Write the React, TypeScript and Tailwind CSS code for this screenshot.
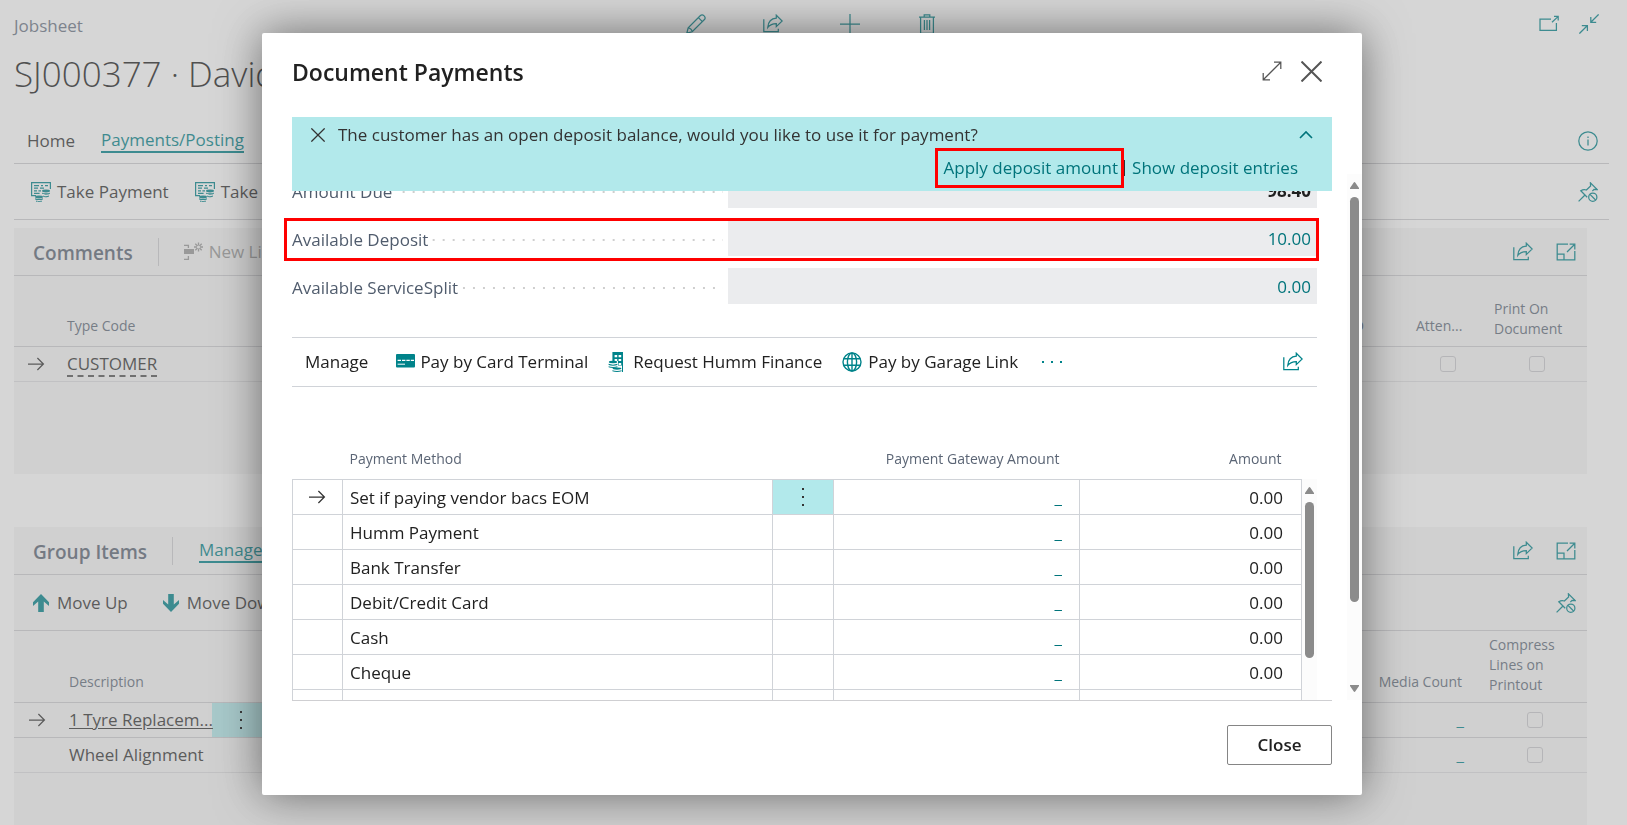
import React from "react";

type IconProps = { className?: string };

const base = {
  fill: "none",
  stroke: "currentColor",
  strokeWidth: 1.25,
  "aria-hidden": true,
} as const;

function ShareIcon({ className = "size-5" }: IconProps) {
  return (
    <svg viewBox="0 0 20 20" className={className} {...base}>
      <path d="M.8 5.2V17.6H15.3V14.8" />
      <path d="M13.3 1.2 19.2 7 13.3 12.6V9.6C9.6 9.6 7 10.6 4.8 13.4 5.2 8 8.4 4.5 13.3 4.2Z" />
    </svg>
  );
}

function PencilIcon() {
  return (
    <svg viewBox="0 0 20 20" className="size-5" {...base}>
      <path d="M.8 19.2 2.2 13.8 14.2 1.8C15.2.8 16.8.6 18.1 1.9 19.4 3.2 19.2 4.8 18.2 5.8L6.2 17.8Z" />
      <path d="M12.4 3.6 16.4 7.6M2.2 13.8C4 13.8 6.2 16 6.2 17.8" />
    </svg>
  );
}

function PlusIcon() {
  return (
    <svg viewBox="0 0 20 20" className="size-5" {...base}>
      <path d="M10 0V20M0 10H20" />
    </svg>
  );
}

function TrashIcon() {
  return (
    <svg viewBox="0 0 20 20" className="size-5" {...base}>
      <path d="M2 3.2H18M7.2 3V.8H12.8V3M3.6 3.4V19.4H16.4V3.4M7.4 6V16M10 6V16M12.6 6V16" />
    </svg>
  );
}

function PopOutIcon() {
  return (
    <svg viewBox="0 0 20 20" className="size-5" {...base}>
      <path d="M12 5H1V16.4H17.4V9M13 8.2 19 2.6M15 2.4H19.2V6.6" />
    </svg>
  );
}

function CollapseIcon() {
  return (
    <svg viewBox="0 0 20 20" className="size-5" {...base}>
      <path d="M19.6.4 11.8 8.2M11.8 3V8.4H17.2M.4 19.6 8.2 11.8M2.8 11.6H8.4V17" />
    </svg>
  );
}

function ExpandIcon() {
  return (
    <svg viewBox="0 0 20 20" className="size-5" {...base}>
      <path d="M1.2 18.8 18.8 1.2M12 1.2H18.8V8M1.2 12V18.8H8" />
    </svg>
  );
}

function CloseIcon({ className = "size-5" }: IconProps) {
  return (
    <svg viewBox="0 0 20 20" className={className} {...base}>
      <path d="M.5.5 19.5 19.5M19.5.5.5 19.5" vectorEffect="non-scaling-stroke" />
    </svg>
  );
}

function InfoIcon() {
  return (
    <svg viewBox="0 0 20 20" className="size-5" {...base}>
      <circle cx="10" cy="10" r="9.2" />
      <path d="M10 8.4V14.4M10 5.4V7" />
    </svg>
  );
}

function UnpinIcon() {
  return (
    <svg viewBox="0 0 20 20" className="size-5" {...base}>
      <path d="M.6 19.4 7 13M9.2 15.2 2.8 8.8C4.8 7.4 7 7.4 8.4 8L12.6 4 12.4.8 19.2 7.6 16 7.4 14.4 9.2" />
      <circle cx="14.8" cy="15.2" r="4.1" />
      <path d="M12 12.4 17.6 18" />
    </svg>
  );
}

function MaximizePartIcon() {
  return (
    <svg viewBox="0 0 20 20" className="size-5" {...base}>
      <path d="M12 2.2H1.2V17.8H18.8V9M1.2 12H8V17.8M11 10 18 3M13.6 2.2H18.8V7.4" />
    </svg>
  );
}

function RowArrowIcon() {
  return (
    <svg viewBox="0 0 18 18" className="size-[18px]" {...base}>
      <path d="M1 9H16.4M10.4 3 16.4 9 10.4 15" />
    </svg>
  );
}

function TakePaymentIcon() {
  return (
    <svg viewBox="0 0 20 20" className="size-5 shrink-0" fill="currentColor" aria-hidden>
      <path d="M0 0H20V7H18.8V1.2H1.2V13H5V14.2H0Z" />
      <path d="M3 3H8V4.2H3ZM10 3H12V4.2H10ZM14 3H17V4.2H14ZM3 5.6H7V6.8H3ZM9 5.6H13V6.8H9ZM3 8.2H6V9.4H3ZM7.4 8.2H10V9.4H7.4ZM3 10.8H8.6V12H3Z" />
      <ellipse cx="15" cy="9" rx="4" ry="1.4" />
      <path d="M11 10.4C12.5 11.6 17.5 11.6 19 10.4V11.6C17.5 13.2 12.5 13.2 11 11.6ZM12 13.4C13 14.4 16 14.4 18 13.4V14.6C17 15.6 13 15.6 12 14.6Z" />
      <ellipse cx="8" cy="15" rx="4" ry="1.4" />
      <path d="M4 16.2C5.5 17.2 10.5 17.2 12 16.2V17.2C10.5 18.4 5.5 18.4 4 17.2ZM5 18.6C6 19.2 10 19.2 11 18.6V19.6C10 20 6 20 5 19.6Z" />
    </svg>
  );
}

function NewLineIcon() {
  return (
    <svg viewBox="0 0 20 20" className="size-5 shrink-0" aria-hidden>
      <path d="M0 7H10V12H0Z" fill="currentColor" />
      <path
        d="M0 3.4H4.4V6M0 17.4H4.4V14M14.5 .5V9.5M10 5H19M11.3 1.8 17.7 8.2M17.7 1.8 11.3 8.2"
        fill="none"
        stroke="currentColor"
        strokeWidth="1.3"
      />
      <circle cx="14.5" cy="5" r="1.6" className="fill-[#f5f5f5]" />
    </svg>
  );
}

function MoveIcon({ className = "" }: IconProps) {
  return (
    <svg viewBox="0 0 16 18" className={`h-[18px] w-4 shrink-0 ${className}`} fill="currentColor" aria-hidden>
      <path d="M8 0 16 8.2V12L10.8 7.4V18H5.2V7.4L0 12V8.2Z" />
    </svg>
  );
}

function CardIcon() {
  return (
    <svg viewBox="0 0 20 20" className="size-5 shrink-0" aria-hidden>
      <rect x="0" y="2" width="19" height="13.5" rx="1" fill="currentColor" />
      <path d="M1.6 8.4H18" stroke="white" strokeWidth="1.4" strokeDasharray="3.4 1" />
      <path d="M1.6 12.2H9" stroke="white" strokeWidth="1" />
    </svg>
  );
}

function FinanceIcon() {
  return (
    <svg viewBox="0 0 16 20" className="h-5 w-4 shrink-0" aria-hidden>
      <path d="M4.4 0H15V20H4.4Z" fill="currentColor" />
      <path d="M6.6 3H9.2V5.2H6.6ZM10.6 3H13.2V5.2H10.6ZM6.6 7H9.2V9H6.6ZM10.6 7H13.2V9H10.6ZM10.6 11H13.2V13H10.6Z" fill="white" />
      <path d="M0 9H10V13.5H14V20H2V15H0Z" fill="white" />
      <g fill="currentColor">
        <ellipse cx="5" cy="10" rx="4.2" ry="1.2" />
        <path d="M.6 11.8C3 12.9 7 12.9 9.4 11.8V12.9C7 14 3 14 .6 12.9ZM.6 14.2C3 15.3 7 15.3 9.4 14.2V15.3C7 16.3 3 16.3 .6 15.3Z" />
        <ellipse cx="9" cy="16.6" rx="4.4" ry="1.1" />
        <path d="M4.4 18.2C7 19.2 11 19.2 13.6 18.2V19.2C11 20.2 7 20.2 4.4 19.2Z" />
      </g>
    </svg>
  );
}

function GlobeIcon() {
  return (
    <svg viewBox="0 0 20 20" className="size-5 shrink-0" {...base} strokeWidth={1.4}>
      <circle cx="10" cy="10" r="9" />
      <ellipse cx="10" cy="10" rx="4.6" ry="9" />
      <path d="M10 1V19M1.6 6.8H18.4M1.6 13.2H18.4" />
    </svg>
  );
}

function Dots({ vertical = false }: { vertical?: boolean }) {
  return vertical ? (
    <svg viewBox="0 0 4 20" className="h-5 w-1" fill="currentColor" aria-hidden>
      <path d="M1 1H3V3H1ZM1 9H3V11H1ZM1 17H3V19H1Z" />
    </svg>
  ) : (
    <svg viewBox="0 0 20 4" className="h-1 w-5" fill="currentColor" aria-hidden>
      <path d="M0 1H2V3H0ZM9 1H11V3H9ZM18 1H20V3H18Z" />
    </svg>
  );
}

function IconButton({ label, children, className = "" }: { label: string; children: React.ReactNode; className?: string }) {
  return (
    <button type="button" aria-label={label} className={`flex items-center justify-center ${className}`}>
      {children}
    </button>
  );
}

function Check({ label }: { label: string }) {
  return (
    <input
      type="checkbox"
      aria-label={label}
      className="mx-auto block size-4 appearance-none rounded-[3px] border border-[#c9c9cd]"
    />
  );
}

const TEAL = "text-[#00838a]";

function PageHeader() {
  return (
    <header className="pr-[18px] pl-[14px]">
      <div className="flex h-12 items-center">
        <span className="w-[672px] pt-1 text-[17px] text-[#6b7585]">Jobsheet</span>
        <div className={`flex flex-1 items-center gap-[57px] ${TEAL}`}>
          <IconButton label="Edit"><PencilIcon /></IconButton>
          <IconButton label="Share"><ShareIcon /></IconButton>
          <IconButton label="New"><PlusIcon /></IconButton>
          <IconButton label="Delete"><TrashIcon /></IconButton>
        </div>
        <div className={`flex gap-5 pr-[10px] ${TEAL}`}>
          <IconButton label="Open in new window"><PopOutIcon /></IconButton>
          <IconButton label="Collapse"><CollapseIcon /></IconButton>
        </div>
      </div>
      <h1 className="h-[70px] pt-[2px] text-[35px] leading-[48px] font-light whitespace-nowrap text-[#212121]">
        SJ000377 · David
      </h1>
      <nav className="flex h-[46px] items-center gap-[26px] border-b border-[#cdcdd1] pr-[11px] pl-[13px]">
        <a href="#home" className="text-[#333]">Home</a>
        <a href="#payments" className={`border-b-2 border-current leading-[22px] ${TEAL}`}>Payments/Posting</a>
        <IconButton label="Details" className={`ml-auto ${TEAL}`}><InfoIcon /></IconButton>
      </nav>
      <div className="flex h-14 items-center gap-[26px] border-b border-[#cdcdd1] pr-[11px] pl-[17px] text-[#333]">
        <button type="button" className="flex items-center gap-[6px]">
          <span className={TEAL}><TakePaymentIcon /></span>Take Payment
        </button>
        <button type="button" className="flex items-center gap-[6px]">
          <span className={TEAL}><TakePaymentIcon /></span>Take Deposit
        </button>
        <IconButton label="Unpin" className={`ml-auto ${TEAL}`}><UnpinIcon /></IconButton>
      </div>
    </header>
  );
}

function PartActions() {
  return (
    <div className={`ml-auto flex gap-[23px] ${TEAL}`}>
      <IconButton label="Share part"><ShareIcon /></IconButton>
      <IconButton label="Maximize part"><MaximizePartIcon /></IconButton>
    </div>
  );
}

function CommentsPart() {
  return (
    <section className="mt-2 mr-10 ml-[14px] h-[246px] bg-[#f5f5f5]">
      <div className="flex h-12 items-center border-b border-[#cdcdd1] pr-[11px] pl-[19px]">
        <h2 className="pt-[2px] text-[19px] font-semibold text-[#5c6675]">Comments</h2>
        <span className="ml-[25px] h-7 w-px bg-[#cdcdd1]" />
        <button type="button" className="ml-[25px] flex items-center gap-[5px] text-[#999]" disabled>
          <NewLineIcon />New Line
        </button>
        <PartActions />
      </div>
      <table className="w-full table-fixed border-collapse">
        <colgroup>
          <col className="w-[53px]" />
          <col />
          <col className="w-[78px]" />
          <col className="w-[78px]" />
          <col className="w-[100px]" />
        </colgroup>
        <thead>
          <tr className="h-[70px] border-b border-[#cdcdd1] text-left align-bottom text-[14px] leading-5 text-[#606b7a]">
            <th />
            <th className="pb-[10px] font-normal">Type Code</th>
            <th className="pr-[45px] pb-[10px] text-right font-normal">ID</th>
            <th className="pb-[10px] pl-[7px] font-normal">Atten...</th>
            <th className="pb-[7px] pl-[7px] font-normal">Print On<br />Document</th>
          </tr>
        </thead>
        <tbody>
          <tr className="h-[35px] border-b border-[#dddddf]">
            <td className="pl-[13px] text-[#333]"><RowArrowIcon /></td>
            <td className="text-[#333]">
              <a href="#customer" className="border-b-2 border-dashed border-[#555] leading-5">CUSTOMER</a>
            </td>
            <td />
            <td><Check label="Attention" /></td>
            <td><Check label="Print on document" /></td>
          </tr>
        </tbody>
      </table>
    </section>
  );
}

function GroupItemsPart() {
  const rows = [
    { text: "1 Tyre Replacem...", active: true },
    { text: "Wheel Alignment", active: false },
  ];
  return (
    <section className="mt-[53px] mr-10 ml-[14px] flex-1 bg-[#f5f5f5]">
      <div className="flex h-12 items-center border-b border-[#cdcdd1] pr-[11px] pl-[19px]">
        <h2 className="pt-[2px] text-[19px] font-semibold text-[#5c6675]">Group Items</h2>
        <span className="ml-[25px] h-7 w-px bg-[#cdcdd1]" />
        <a href="#manage" className={`ml-[26px] border-b-2 border-current leading-[22px] ${TEAL}`}>Manage</a>
        <PartActions />
      </div>
      <div className="flex h-14 items-center gap-[35px] border-b border-[#cdcdd1] pr-[11px] pl-[19px] text-[#333]">
        <button type="button" className="flex items-center gap-2">
          <span className={TEAL}><MoveIcon /></span>Move Up
        </button>
        <button type="button" className="flex items-center gap-2">
          <span className={TEAL}><MoveIcon className="rotate-180" /></span>Move Down
        </button>
        <IconButton label="Unpin actions" className={`ml-auto ${TEAL}`}><UnpinIcon /></IconButton>
      </div>
      <table className="w-full table-fixed border-collapse">
        <colgroup>
          <col className="w-[55px]" />
          <col className="w-[143px]" />
          <col className="w-[58px]" />
          <col />
          <col className="w-[105px]" />
        </colgroup>
        <thead>
          <tr className="h-[71px] border-b border-[#cdcdd1] text-left align-bottom text-[14px] leading-5 text-[#606b7a]">
            <th />
            <th className="pb-[10px] font-normal">Description</th>
            <th />
            <th className="pr-[20px] pb-[10px] text-right font-normal">Media Count</th>
            <th className="pb-[7px] pl-[7px] font-normal">Compress<br />Lines on<br />Printout</th>
          </tr>
        </thead>
        <tbody>
          {rows.map((r) => (
            <tr key={r.text} className="h-[35px] border-b border-[#cdcdd1] last:border-[#dddddf]">
              <td className="pl-[14px] text-[#333]">{r.active && <RowArrowIcon />}</td>
              <td className="whitespace-nowrap text-[#333]">
                {r.active ? <a href="#item" className="underline underline-offset-2">{r.text}</a> : r.text}
              </td>
              <td className={r.active ? "bg-[#b2e9eb] pl-[27px]" : ""}>{r.active && <Dots vertical />}</td>
              <td className={`pr-[18px] text-right ${TEAL}`}>_</td>
              <td><Check label={`Compress ${r.text}`} /></td>
            </tr>
          ))}
        </tbody>
      </table>
    </section>
  );
}

function Scrollbar({ className, thumb, down = false }: { className: string; thumb: string; down?: boolean }) {
  return (
    <div className={`flex w-[15px] shrink-0 flex-col items-center bg-[#fcfcfc] pt-2 text-[#8b8b8b] ${className}`} aria-hidden>
      <svg viewBox="0 0 9 7" className="h-[7px] w-[9px] shrink-0" fill="currentColor">
        <path d="M4.5 0Q5 0 5.4.7L9 6V7H0V6L3.6.7Q4 0 4.5 0Z" />
      </svg>
      <div className={`mt-2 w-[9px] rounded-full bg-[#8b8b8b] ${thumb}`} />
      {down && (
        <svg viewBox="0 0 9 7" className="mt-auto mb-2 h-[7px] w-[9px] shrink-0" fill="currentColor">
          <path d="M4.5 7Q5 7 5.4 6.3L9 1V0H0V1L3.6 6.3Q4 7 4.5 7Z" />
        </svg>
      )}
    </div>
  );
}

const fields = [
  { label: "Amount Due", value: "98.40", style: "font-bold text-[#212121]" },
  { label: "Available Deposit", value: "10.00", style: "text-[#00747b]", highlight: true },
  { label: "Available ServiceSplit", value: "0.00", style: "text-[#00747b]" },
];

const methods = ["Set if paying vendor bacs EOM", "Humm Payment", "Bank Transfer", "Debit/Credit Card", "Cash", "Cheque", ""];

function PaymentsTable() {
  return (
    <div className="flex min-h-0 flex-1 overflow-hidden">
      <table className="min-w-0 flex-1 table-fixed border-collapse">
        <colgroup>
          <col className="w-[50px]" />
          <col />
          <col className="w-[61px]" />
          <col className="w-[246px]" />
          <col className="w-[222px]" />
        </colgroup>
        <thead>
          <tr className="h-[92px] align-bottom text-[14px] leading-5 text-[#5b6575]">
            <th />
            <th className="pb-[10px] pl-[7px] text-left font-normal">Payment Method</th>
            <th />
            <th className="pr-5 pb-[10px] text-right font-normal">Payment Gateway Amount</th>
            <th className="pr-5 pb-[10px] text-right font-normal">Amount</th>
          </tr>
        </thead>
        <tbody>
          {methods.map((m, i) => (
            <tr key={m} className="h-[35px] *:border *:border-[#d0d3d8]">
              <td className="pl-[15px] text-[#333]">{i === 0 && <RowArrowIcon />}</td>
              <td className="pt-[2px] pl-[7px] text-[#212121]">{m}</td>
              <td className={i === 0 ? "bg-[#b2e9eb] pl-7 text-[#333]" : ""}>{i === 0 && <Dots vertical />}</td>
              <td className="pt-[2px] pr-[17px] text-right text-[#00747b]">{m && "_"}</td>
              <td className="pt-[2px] pr-[18px] text-right text-[#212121]">{m && "0.00"}</td>
            </tr>
          ))}
        </tbody>
      </table>
      <Scrollbar className="mt-[92px]" thumb="h-[156px]" />
    </div>
  );
}

function PaymentsDialog() {
  return (
    <div
      role="dialog"
      aria-label="Document Payments"
      className="flex min-w-0 flex-1 flex-col overflow-hidden rounded-[2px] bg-white text-[#212121] shadow-[0_0_45px_rgba(0,0,0,0.5)]"
    >
      <div className="flex h-[84px] shrink-0 items-center justify-between pr-10 pb-2 pl-[30px]">
        <h2 className="pt-[2px] text-[23px] font-semibold">Document Payments</h2>
        <div className="flex gap-[19px] text-[#555]">
          <IconButton label="Expand"><ExpandIcon /></IconButton>
          <IconButton label="Close dialog"><CloseIcon className="size-[21px] stroke-2" /></IconButton>
        </div>
      </div>

      <div className="flex min-h-0 flex-1">
        <div className="flex min-w-0 flex-1 flex-col pr-[15px] pl-[30px]">
          <div className="h-[74px] shrink-0 bg-[#b2e9eb] px-[19px] pt-[6px]">
            <div className="flex h-6 items-center text-[#333]">
              <IconButton label="Dismiss"><CloseIcon className="size-[14px]" /></IconButton>
              <p className="ml-[13px]">The customer has an open deposit balance, would you like to use it for payment?</p>
              <IconButton label="Collapse notification" className="ml-auto text-[#00747b]">
                <svg viewBox="0 0 14 14" className="size-[14px]" {...base} strokeWidth={1.6}>
                  <path d="M1 10 7 4 13 10" />
                </svg>
              </IconButton>
            </div>
            <div className="flex h-[42px] items-center justify-end pr-[15px] text-[#00747b]">
              <a href="#apply" className="border-3 border-[#ff0000] py-[5px] pr-[3px] pl-[6px] leading-6">Apply deposit amount</a>
              <span className="h-4 w-px bg-[#333]" />
              <a href="#entries" className="ml-[7px]">Show deposit entries</a>
            </div>
          </div>

          <div className="-ml-2 flex min-h-0 flex-1 flex-col overflow-hidden pr-[15px] pl-2">
            <div className="-mt-[19px] flex shrink-0 flex-col gap-3">
              {fields.map((f) => (
                <div key={f.label} className="relative flex h-9">
                  <div className="flex w-[436px] shrink-0 items-center pt-1 pr-[5px]">
                    <span className="text-[#505c6d]">{f.label}</span>
                    <span className="ml-1 h-[2px] flex-1 bg-[linear-gradient(90deg,#cfcfcf_2px,transparent_2px)] bg-[length:10px_2px] bg-right" />
                  </div>
                  <output aria-label={f.label} className={`flex flex-1 items-center justify-end bg-[#ebecee] pt-[2px] pr-[6px] ${f.style}`}>
                    {f.value}
                  </output>
                  {f.highlight && <span className="absolute -top-[2px] -right-[2px] -bottom-[5px] -left-2 border-3 border-[#ff0000]" />}
                </div>
              ))}
            </div>

            <div className="mt-[33px] flex h-[50px] shrink-0 items-center border-y border-[#d0d3d8] pr-[14px] pl-[13px]">
              <button type="button">Manage</button>
              <button type="button" className="ml-7 flex items-center gap-1">
                <span className={TEAL}><CardIcon /></span>Pay by Card Terminal
              </button>
              <button type="button" className="ml-5 flex items-center gap-[9px]">
                <span className={TEAL}><FinanceIcon /></span>Request Humm Finance
              </button>
              <button type="button" className="ml-5 flex items-center gap-[6px]">
                <span className={TEAL}><GlobeIcon /></span>Pay by Garage Link
              </button>
              <IconButton label="More options" className={`ml-6 ${TEAL}`}><Dots /></IconButton>
              <IconButton label="Share list" className={`ml-auto ${TEAL}`}><ShareIcon /></IconButton>
            </div>

            <PaymentsTable />
          </div>
        </div>
        <Scrollbar className="mt-[57px]" thumb="h-[405px]" down />
      </div>

      <div className="mx-[30px] flex h-[95px] shrink-0 items-start justify-end border-t border-[#cfcfd2] pt-6">
        <button type="button" className="h-10 w-[105px] rounded-[2px] border border-[#858585] font-semibold">Close</button>
      </div>
    </div>
  );
}

export default function App() {
  return (
    <div className="relative h-screen overflow-hidden bg-white [font-family:'Open_Sans',sans-serif] text-[17px] leading-6">
      <main className="flex h-full flex-col">
        <PageHeader />
        <CommentsPart />
        <GroupItemsPart />
      </main>
      <div className="fixed inset-0 flex bg-[rgb(152,152,152)]/40 pt-[33px] pr-[265px] pb-[30px] pl-[262px]">
        <PaymentsDialog />
      </div>
    </div>
  );
}
